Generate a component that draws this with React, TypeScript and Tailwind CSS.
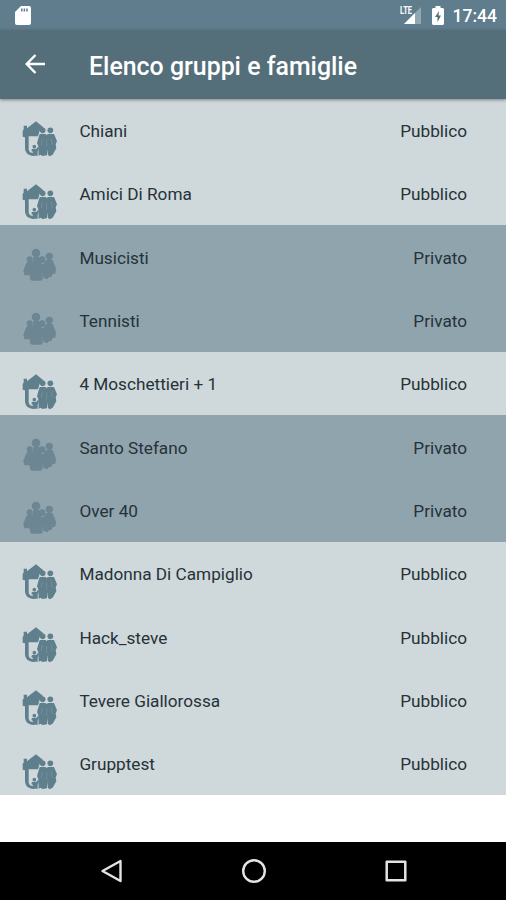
import React from 'react';

interface Group {
  name: string;
  isPublic: boolean;
}

const GROUPS: Group[] = [
  { name: 'Chiani', isPublic: true },
  { name: 'Amici Di Roma', isPublic: true },
  { name: 'Musicisti', isPublic: false },
  { name: 'Tennisti', isPublic: false },
  { name: '4 Moschettieri + 1', isPublic: true },
  { name: 'Santo Stefano', isPublic: false },
  { name: 'Over 40', isPublic: false },
  { name: 'Madonna Di Campiglio', isPublic: true },
  { name: 'Hack_steve', isPublic: true },
  { name: 'Tevere Giallorossa', isPublic: true },
  { name: 'Grupptest', isPublic: true },
];

const FamilyIcon: React.FC = () => (
  <svg viewBox="0 0 108 108" className="w-9 h-9 shrink-0" fill="#5f7f8c">
    {/* House */}
    <path d="M5 14h10v8L42 1l22 18-11 10-5 17H20v38c0 7 5 12 17 13l-1 8C18 104 9 95 9 80V49L2 47V29l3-3z" />
    {/* Parents */}
    <circle cx="62" cy="28" r="8.500" />
    <circle cx="85" cy="28" r="8.500" />
    <path d="M53 39h18l3 4 3-4h19l9 22-4 9 2 12-11 19-9 5-5-4V84l-3 19-14 2-5-4-6 3-1-28-4-10z" />
    <path d="M61 54l-3 17M88 52l3 19M74 56v22" stroke="#8ba1aa" strokeWidth="1.500" />
    {/* Child */}
    <circle cx="37" cy="77" r="5.500" />
    <path d="M30 84h13l5-7 3 5-4 10v12H33l-1-12-4-3z" />
  </svg>
);

const PeopleIcon: React.FC = () => (
  <svg viewBox="0 -3 108 108" className="w-9 h-9 shrink-0" fill="#6c8693">
    <circle cx="82" cy="25" r="11" />
    <path d="M72 36h20l6 16 4 11-2 14-8 1-4 9-8 1-3 6-13-4-4-35z" />
    <circle cx="42" cy="15" r="13" />
    <circle cx="23" cy="34" r="9" />
    <circle cx="60" cy="35" r="10" />
    <path d="M34 27h17l5 18 9 5 3 21-6 3v20l-5 4H29l-5-4-1-12H7L4 68l8-20 4-7 15 1z" />
  </svg>
);

const StatusBar: React.FC = () => (
  <div className="flex h-[30px] shrink-0 items-center bg-[#607d8d] pl-[15px] pr-[9px]">
    <svg width="16" height="19" viewBox="0 0 16 19" className="mt-px">
      <path d="M6 0h8a2 2 0 0 1 2 2v15a2 2 0 0 1-2 2H2a2 2 0 0 1-2-2V6z" fill="#fff" />
      <path d="M6.800 2.500v3M9.400 2.500v3M12 2.500v3" stroke="#607d8d" strokeWidth="1.500" />
    </svg>
    <div className="flex-1" />
    <svg width="22" height="19" viewBox="0 0 22 19" className="mr-[10px]">
      <path d="M4 18L21 1v17z" fill="#91a7b2" />
      <path d="M4 18L15 7v11z" fill="#fff" />
      <path d="M0 0h12v8.500H0z" fill="#607d8d" />
      <text x="0" y="8" fill="#fff" fontSize="10" fontWeight="700" fontFamily="Roboto, sans-serif" textLength="12" lengthAdjust="spacingAndGlyphs">LTE</text>
    </svg>
    <svg width="12" height="19" viewBox="0 0 12 19" className="mr-[9px]">
      <path d="M3.500 0h5v2H11l1 1v15l-1 1H1l-1-1V3l1-1h2.500z" fill="#fff" />
      <path d="M7 5l-4 6h2.500v5L9 9.500H6.500z" fill="#546e7a" />
    </svg>
    <span className="mt-[3px] text-[17.500px] font-medium leading-none text-white">17:44</span>
  </div>
);

const Toolbar: React.FC = () => (
  <div className="relative z-10 flex h-[68.700px] shrink-0 items-center bg-[#546e7a] pl-[25px] shadow-[0_1px_3px_rgba(0,0,0,0.4)]">
    <svg width="20" height="20" viewBox="0 0 20 20" fill="none" stroke="#fff" strokeWidth="2.400">
      <path d="M20 10H2M10.500 1L1.700 10l8.800 9" />
    </svg>
    <h1 className="ml-[44px] mt-[6px] whitespace-nowrap text-[24.900px] font-medium leading-none text-white">
      Elenco gruppi e famiglie
    </h1>
  </div>
);

const GroupRow: React.FC<{ group: Group }> = ({ group }) => (
  <li
    className={`flex h-[63.300px] shrink-0 items-start pl-[22px] pr-[39px] ${
      group.isPublic ? 'bg-[#cfd8db]' : 'bg-[#90a4ae]'
    }`}
  >
    <div className="pt-[22px]">{group.isPublic ? <FamilyIcon /> : <PeopleIcon />}</div>
    <span className="ml-[21.400px] flex-1 pt-[22.500px] text-[17.200px] leading-[20px] text-[#263238]">{group.name}</span>
    <span className="pt-[22.500px] text-[17.200px] leading-[20px] text-[#263238]">
      {group.isPublic ? 'Pubblico' : 'Privato'}
    </span>
  </li>
);

const NavBar: React.FC = () => (
  <div className="flex h-[58px] shrink-0 items-center justify-between bg-black pl-[100px] pr-[98px]">
    <svg width="24" height="26" viewBox="0 0 24 26" fill="none" stroke="#e4e4e4" strokeWidth="2.400" strokeLinejoin="round">
      <path d="M20.500 3v20L2.500 13z" />
    </svg>
    <svg width="26" height="26" viewBox="0 0 26 26" fill="none" stroke="#e4e4e4" strokeWidth="2.400">
      <circle cx="13" cy="13" r="10.800" />
    </svg>
    <svg width="24" height="24" viewBox="0 0 24 24" fill="none" stroke="#e4e4e4" strokeWidth="2.500" strokeLinejoin="round">
      <rect x="2.700" y="2.700" width="18.600" height="18.600" />
    </svg>
  </div>
);

const App: React.FC = () => {
  return (
    <div className="flex h-[900px] w-[506px] flex-col overflow-hidden bg-white font-['Roboto',sans-serif]">
      <StatusBar />
      <Toolbar />
      <ul className="flex-1">
        {GROUPS.map((g) => (
          <GroupRow key={g.name} group={g} />
        ))}
      </ul>
      <NavBar />
    </div>
  );
};

export default App;
